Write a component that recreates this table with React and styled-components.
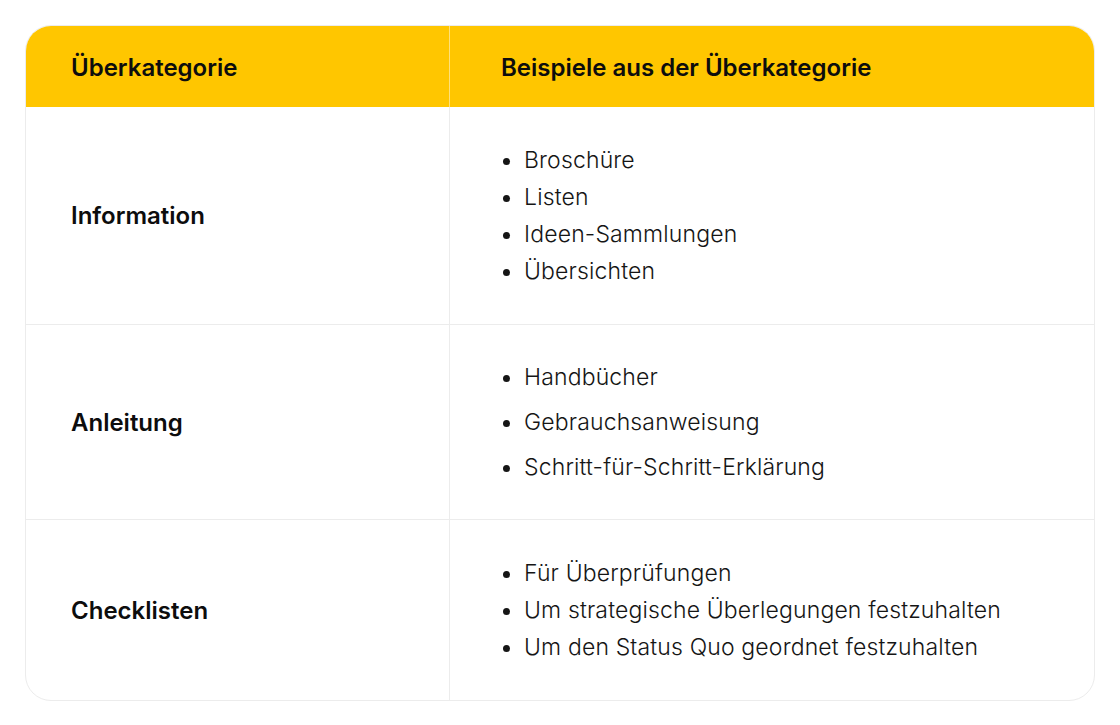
import React from 'react'
import styled, { createGlobalStyle } from 'styled-components'

const GlobalStyle = createGlobalStyle`
    html, body {
        margin: 0;
        padding: 0;
        background: #ffffff;
    }
    body {
        font-family: Inter, "Noto Sans", sans-serif;
        color: #111111;
    }
`

const rows = [
    {
        title: 'Information',
        items: ['Broschüre', 'Listen', 'Ideen-Sammlungen', 'Übersichten'],
        height: 218,
        spacing: 37
    },
    {
        title: 'Anleitung',
        items: ['Handbücher', 'Gebrauchsanweisung', 'Schritt-für-Schritt-Erklärung'],
        height: 195,
        spacing: 45
    },
    {
        title: 'Checklisten',
        items: [
            'Für Überprüfungen',
            'Um strategische Überlegungen festzuhalten',
            'Um den Status Quo geordnet festzuhalten'
        ],
        height: 180,
        spacing: 37
    }
]

export default function App() {
    return (
        <>
            <GlobalStyle />
            <Page>
                <Table>
                    <HeadCell>Überkategorie</HeadCell>
                    <HeadCell $right>Beispiele aus der Überkategorie</HeadCell>
                    {rows.map((row, i) => (
                        <React.Fragment key={row.title}>
                            <Cell $height={row.height} $last={i === rows.length - 1}>
                                <Label>{row.title}</Label>
                            </Cell>
                            <Cell $right $height={row.height} $last={i === rows.length - 1}>
                                <List>
                                    {row.items.map(item => (
                                        <Item key={item} $spacing={row.spacing}>{item}</Item>
                                    ))}
                                </List>
                            </Cell>
                        </React.Fragment>
                    ))}
                </Table>
            </Page>
        </>
    )
}

const Page = styled.div`
    padding: 25px;
    width: 1070px;
`

const Table = styled.div`
    display: grid;
    grid-template-columns: 423px 1fr;
    border: 1px solid #ececec;
    border-radius: 26px;
    overflow: hidden;
    background: #ffffff;
`

const HeadCell = styled.div`
    height: 81px;
    box-sizing: border-box;
    display: flex;
    align-items: center;
    padding-left: ${p => (p.$right ? '51px' : '45px')};
    padding-top: 2px;
    background: #ffc600;
    border-left: ${p => (p.$right ? '1px solid #ffe07a' : 'none')};
    font-size: 24px;
    font-weight: 600;
    color: #0d0d0d;
`

const Cell = styled.div`
    height: ${p => p.$height}px;
    box-sizing: border-box;
    display: flex;
    align-items: center;
    padding-left: ${p => (p.$right ? '33px' : '45px')};
    border-left: ${p => (p.$right ? '1px solid #ececec' : 'none')};
    border-bottom: ${p => (p.$last ? 'none' : '1px solid #ececec')};
`

const Label = styled.div`
    font-size: 24px;
    font-weight: 600;
    color: #0d0d0d;
`

const List = styled.ul`
    margin: 0;
    padding: 0 0 0 41px;
    list-style: disc;
`

const Item = styled.li`
    font-size: 23px;
    font-weight: 350;
    letter-spacing: 0.15px;
    line-height: ${p => p.$spacing}px;
    color: #151515;
    padding-left: 0;

    ::marker {
        font-size: 16px;
    }
`
